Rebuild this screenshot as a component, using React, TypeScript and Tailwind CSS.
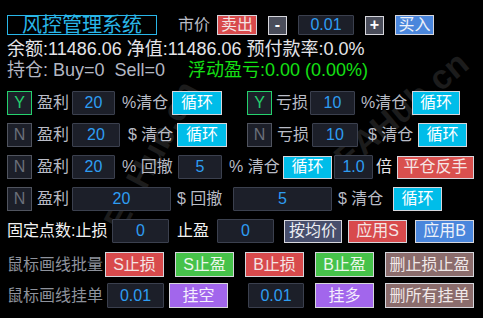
import React from 'react';

const FONT = { fontFamily: '"Liberation Sans", "Noto Sans CJK SC", sans-serif' };

function Toggle({ on }: { on?: boolean }) {
  return (
    <div
      className={
        'w-[25px] h-[24px] shrink-0 flex items-center justify-center border bg-[#1c1f29] text-[16px] leading-none ' +
        (on ? 'border-[#25d06d] text-[#25d06d]' : 'border-[#50545f] text-[#6b6f7a]')
      }
    >
      {on ? 'Y' : 'N'}
    </div>
  );
}

function Field({ value, className }: { value: string; className: string }) {
  return (
    <div
      className={
        'shrink-0 flex items-center justify-center border border-[#3b404e] bg-[#1c1f29] text-[#2e9df2] text-[16px] leading-none rounded-[1px] ' +
        className
      }
    >
      {value}
    </div>
  );
}

function Btn({ label, className }: { label: string; className: string }) {
  return (
    <div
      className={
        'shrink-0 flex items-center justify-center border border-[#d6d6dc] text-[16px] leading-none ' + className
      }
    >
      {label}
    </div>
  );
}

function Text({ children, className }: { children: React.ReactNode; className: string }) {
  return <span className={'shrink-0 whitespace-pre text-[16px] leading-none ' + className}>{children}</span>;
}

export default function App() {
  return (
    <div
      className="relative w-[483px] h-[318px] bg-black overflow-hidden pl-[7px] pt-[15px] text-[#b9bcc6]"
      style={FONT}
    >
      {/* watermark */}
      <div className="pointer-events-none absolute left-[70px] top-[130px] -rotate-[62deg] text-[34px] font-bold text-[#1c1c1c] whitespace-nowrap">
        EAHub.cn
      </div>
      <div className="pointer-events-none absolute left-[320px] top-[85px] -rotate-[40deg] text-[34px] font-bold text-[#1c1c1c] whitespace-nowrap">
        EAHub.cn
      </div>

      <div className="relative">
        {/* header */}
        <div className="flex items-center h-[20px]">
          <div className="w-[150px] h-[20px] shrink-0 border border-[#29b6e8] text-[#29b6e8] text-[20px] leading-none flex items-center justify-center">
            风控管理系统
          </div>
          <Text className="ml-[21px] w-[31px]">市价</Text>
          <Btn label="卖出" className="ml-[8px] w-[40px] h-[20px] bg-[#d84a4c] text-[#f4e4e4]" />
          <Btn label="-" className="ml-[11px] w-[19px] h-[19px] bg-[#4a4d5a] text-white font-bold" />
          <Field value="0.01" className="ml-[11px] w-[56px] h-[20px]" />
          <Btn label="+" className="ml-[11px] w-[19px] h-[19px] bg-[#4a4d5a] text-white font-bold" />
          <Btn label="买入" className="ml-[11px] w-[39px] h-[20px] bg-[#4a86dc] text-[#eef2fa]" />
        </div>

        <div className="mt-[4px] h-[20px] text-[18px] leading-[20px] text-[#e4e4e8] whitespace-pre">
          余额:11486.06 净值:11486.06 预付款率:0.0%
        </div>
        <div className="mt-[1px] h-[20px] flex text-[18px] leading-[20px] whitespace-pre">
          <span className="w-[181px] shrink-0 text-[#b3b7c3]">持仓: Buy=0  Sell=0</span>
          <span className="text-[#14e014]">浮动盈亏:0.00 (0.00%)</span>
        </div>

        {/* row A */}
        <div className="mt-[11px] flex items-center h-[24px]">
          <Toggle on />
          <Text className="ml-[5px] w-[30px]">盈利</Text>
          <Field value="20" className="ml-[5px] w-[43px] h-[24px]" />
          <Text className="ml-[7px] w-[45px]">%清仓</Text>
          <Btn label="循环" className="ml-[5px] w-[50px] h-[24px] bg-[#00bde9] text-white" />
          <div className="ml-[25px]">
            <Toggle on />
          </div>
          <Text className="ml-[4px] w-[31px]">亏损</Text>
          <Field value="10" className="ml-[3px] w-[45px] h-[24px]" />
          <Text className="ml-[6px] w-[46px]">%清仓</Text>
          <Btn label="循环" className="ml-[5px] w-[48px] h-[24px] bg-[#00bde9] text-white" />
        </div>

        {/* row B */}
        <div className="mt-[8px] flex items-center h-[24px]">
          <Toggle />
          <Text className="ml-[5px] w-[30px]">盈利</Text>
          <Field value="20" className="ml-[5px] w-[48px] h-[24px]" />
          <Text className="ml-[8px] w-[44px]">$ 清仓</Text>
          <Btn label="循环" className="ml-[5px] w-[50px] h-[24px] bg-[#00bde9] text-white" />
          <div className="ml-[20px]">
            <Toggle />
          </div>
          <Text className="ml-[5px] w-[31px]">亏损</Text>
          <Field value="10" className="ml-[4px] w-[46px] h-[24px]" />
          <Text className="ml-[10px] w-[45px]">$ 清仓</Text>
          <Btn label="循环" className="ml-[5px] w-[49px] h-[24px] bg-[#00bde9] text-white" />
        </div>

        {/* row C */}
        <div className="mt-[8px] flex items-center h-[24px]">
          <Toggle />
          <Text className="ml-[5px] w-[30px]">盈利</Text>
          <Field value="20" className="ml-[5px] w-[43px] h-[24px]" />
          <Text className="ml-[7px] w-[49px]">% 回撤</Text>
          <Field value="5" className="ml-[7px] w-[44px] h-[24px]" />
          <Text className="ml-[7px] w-[47px]">% 清仓</Text>
          <Btn label="循环" className="ml-[7px] w-[49px] h-[23px] bg-[#00bde9] text-white" />
          <Field value="1.0" className="ml-[2px] w-[39px] h-[24px]" />
          <Text className="ml-[3px] w-[18px] text-[#e8e8ec]">倍</Text>
          <Btn label="平仓反手" className="ml-[3px] w-[77px] h-[23px] bg-[#d9504e] text-[#f6e6e6]" />
        </div>

        {/* row D */}
        <div className="mt-[8px] flex items-center h-[24px]">
          <Toggle />
          <Text className="ml-[5px] w-[30px]">盈利</Text>
          <Field value="20" className="ml-[5px] w-[99px] h-[24px]" />
          <Text className="ml-[6px] w-[50px]">$ 回撤</Text>
          <Field value="5" className="ml-[6px] w-[99px] h-[24px]" />
          <Text className="ml-[6px] w-[49px]">$ 清仓</Text>
          <Btn label="循环" className="ml-[6px] w-[49px] h-[24px] bg-[#00bde9] text-white" />
        </div>

        {/* row E */}
        <div className="mt-[8px] flex items-center h-[24px]">
          <Text className="w-[105px] text-[#f2f2f2]">固定点数:止损</Text>
          <Field value="0" className="w-[57px] h-[24px]" />
          <Text className="ml-[8px] w-[32px] text-[#f2f2f2]">止盈</Text>
          <Field value="0" className="ml-[8px] w-[57px] h-[24px]" />
          <Btn label="按均价" className="ml-[10px] w-[58px] h-[23px] bg-[#474e6c] text-[#eceef4]" />
          <Btn label="应用S" className="ml-[6px] w-[59px] h-[23px] bg-[#d84a4c] text-[#f4e4e4]" />
          <Btn label="应用B" className="ml-[8px] w-[59px] h-[23px] bg-[#4a86dc] text-[#eef2fa]" />
        </div>

        {/* row F */}
        <div className="mt-[9px] flex items-center h-[25px]">
          <Text className="w-[98px] text-[#8e929c]">鼠标画线批量</Text>
          <Btn label="S止损" className="w-[59px] h-[25px] bg-[#d84a4c] text-[#f4e4e4]" />
          <Btn label="S止盈" className="ml-[11px] w-[59px] h-[25px] bg-[#46c24a] text-[#eef8ee]" />
          <Btn label="B止损" className="ml-[11px] w-[59px] h-[25px] bg-[#d84a4c] text-[#f4e4e4]" />
          <Btn label="B止盈" className="ml-[11px] w-[59px] h-[25px] bg-[#46c24a] text-[#eef8ee]" />
          <Btn label="删止损止盈" className="ml-[11px] w-[89px] h-[25px] bg-[#8b6c6c] text-[#f0e8e8]" />
        </div>

        {/* row G */}
        <div className="mt-[6px] flex items-center h-[25px]">
          <Text className="w-[100px] text-[#8e929c]">鼠标画线挂单</Text>
          <Field value="0.01" className="w-[57px] h-[25px]" />
          <Btn label="挂空" className="ml-[5px] w-[59px] h-[25px] bg-[#a266ec] text-[#f4eefc]" />
          <Field value="0.01" className="ml-[20px] w-[56px] h-[25px]" />
          <Btn label="挂多" className="ml-[11px] w-[59px] h-[25px] bg-[#a266ec] text-[#f4eefc]" />
          <Btn label="删所有挂单" className="ml-[11px] w-[89px] h-[25px] bg-[#8b6c6c] text-[#f0e8e8]" />
        </div>
      </div>
    </div>
  );
}
